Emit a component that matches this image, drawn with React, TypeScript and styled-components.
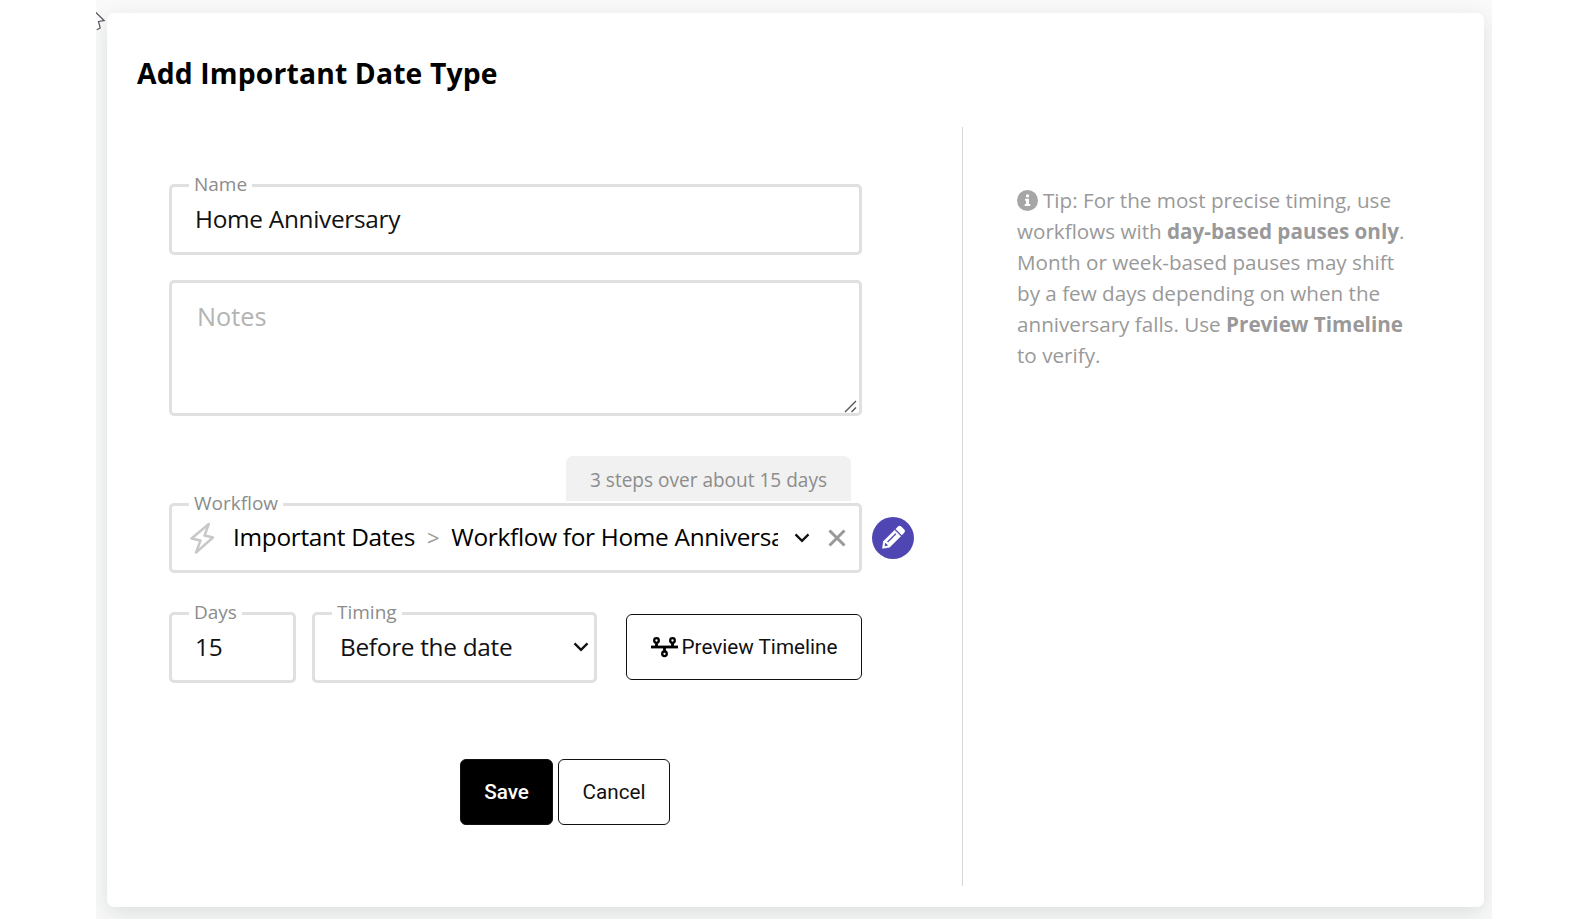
import React from "react";
import styled, { createGlobalStyle } from "styled-components";

const Global = createGlobalStyle`
  *, *::before, *::after { box-sizing: border-box; }
  body { margin: 0; background: #fff; font-family: "Open Sans", sans-serif; color: #000; }
  button, input, textarea { font-family: inherit; }
`;

const Screen = styled.div`
  position: relative;
  width: 1396px;
  height: 919px;
  margin-left: 96px;
  padding: 13px 8px 12px 11px;
  background: #f9f9f9;
  overflow: hidden;
`;

const Cursor = styled.svg`
  position: absolute;
  left: 0;
  top: 11px;
`;

const Card = styled.main`
  display: flex;
  flex-direction: column;
  height: 894px;
  background: #fff;
  border-radius: 7px;
  box-shadow: 0 7px 22px rgba(20, 40, 40, 0.12);
`;

const Title = styled.h1`
  margin: 0;
  padding: 40px 30px 0;
  height: 114px;
  font-size: 28.3px;
  line-height: 40px;
  font-weight: 700;
  letter-spacing: 0.15px;
  white-space: nowrap;
`;

const Columns = styled.div`
  display: flex;
  height: 759px;
`;

const Form = styled.form`
  display: flex;
  flex-direction: column;
  width: 856px;
  padding: 45px 0 0 62px;
  border-right: 1px solid #d8d8d8;
`;

const Field = styled.fieldset<{ $w: number; $h: number }>`
  width: ${(p) => p.$w}px;
  height: ${(p) => p.$h}px;
  flex: none;
  min-width: 0;
  margin: 0;
  padding: 0 8px 0 17px;
  border: 3px solid #e0e0e0;
  border-radius: 5px;
`;

const Legend = styled.legend`
  height: 27px;
  padding: 0 5px;
  font-size: 19px;
  line-height: 25px;
  color: #8c8c8c;
`;

const TextInput = styled.input`
  display: block;
  width: 100%;
  height: 34px;
  margin-top: 2px;
  padding: 0 6px;
  border: 0;
  outline: 0;
  background: transparent;
  font-size: 24.4px;
  letter-spacing: -0.3px;
  color: #111;
`;

const NotesBox = styled.div`
  position: relative;
  width: 693px;
  height: 136px;
  margin-top: 25px;
`;

const Notes = styled.textarea`
  display: block;
  width: 100%;
  height: 100%;
  padding: 16px 25px;
  border: 3px solid #e0e0e0;
  border-radius: 5px;
  outline: 0;
  resize: none;
  font-size: 25.3px;
  line-height: 34px;
  &::placeholder { color: #b4b4b4; }
`;

const Grip = styled.svg`
  position: absolute;
  right: 5px;
  bottom: 3px;
`;

const StepTab = styled.div`
  display: flex;
  align-items: center;
  justify-content: center;
  width: 285px;
  height: 45px;
  margin: 40px 0 0 397px;
  border-radius: 7px 7px 0 0;
  background: #f1f1f1;
  color: #8c8c8c;
  font-size: 19.05px;
  padding-top: 3px;
`;

const WorkflowRow = styled.div`
  display: flex;
  align-items: flex-end;
  gap: 10px;
  height: 82px;
  margin-top: -10px;
`;

const Picker = styled.div`
  display: flex;
  align-items: center;
  height: 34px;
  margin-top: 3px;
`;

const Path = styled.div`
  flex: none;
  width: 545px;
  margin: -2px 16px 0 18px;
  overflow: hidden;
  white-space: nowrap;
  font-size: 24.4px;
  letter-spacing: -0.3px;
  line-height: 34px;
`;

const Separator = styled.span`
  margin: 0 12px 0 12px;
  font-size: 22px;
  color: #999;
`;

const ClearIcon = styled.svg`
  margin-left: 18px;
`;

const EditButton = styled.button`
  display: grid;
  place-items: center;
  width: 42px;
  height: 42px;
  margin-bottom: 14px;
  padding: 0;
  border: 0;
  border-radius: 50%;
  background: #4f46b3;
`;

const TimingRow = styled.div`
  display: flex;
  align-items: flex-end;
  gap: 16px;
  height: 83px;
  margin-top: 27px;
`;

const Select = styled.div`
  display: flex;
  align-items: center;
  justify-content: space-between;
  height: 34px;
  margin: 2px -3px 0 0;
  padding-left: 8px;
  font-size: 24.4px;
  letter-spacing: -0.3px;
  color: #111;

  svg {
    margin-top: 2px;
  }
`;

const Button = styled.button<{ $w: number; $primary?: boolean }>`
  display: flex;
  align-items: center;
  justify-content: center;
  gap: 4px;
  flex: none;
  width: ${(p) => p.$w}px;
  height: 66px;
  padding: 0;
  border: 1px solid #111;
  border-radius: 6px;
  background: ${(p) => (p.$primary ? "#000" : "#fff")};
  color: ${(p) => (p.$primary ? "#fff" : "#111")};
  font-family: Roboto, sans-serif;
  font-size: 20.7px;
  font-weight: ${(p) => (p.$primary ? 500 : 400)};
  white-space: nowrap;
`;

const PreviewSlot = styled.div`
  margin: 0 0 3px 13px;
`;

const Actions = styled.div`
  display: flex;
  gap: 5px;
  margin: 76px 0 0 291px;
`;

const Tip = styled.aside`
  padding: 58px 0 0 54px;
  font-size: 20.65px;
  line-height: 30.9px;
  color: #999;
  white-space: nowrap;
`;

const InfoIcon = styled.svg`
  vertical-align: -3px;
  margin-right: 5px;
`;

const Chevron = () => (
  <svg width="16" height="10" viewBox="0 0 16 10" fill="none" stroke="#111" strokeWidth="2.3">
    <path d="M1.5 1.4 8 7.9l6.5-6.5" />
  </svg>
);

const Bolt = () => (
  <svg width="26" height="34" viewBox="0 0 26 34" fill="none" stroke="#c8c8c8" strokeWidth="2.5" strokeLinejoin="round">
    <path d="M19.800 3 2.500 17.500 11.500 19.500 7 31.500 24 16.500 15.500 14.500Z" />
  </svg>
);

const Pencil = () => (
  <svg width="42" height="42" viewBox="-21 -21 42 42">
    <g transform="translate(-.2 0) rotate(-45) scale(.94)">
      <path d="M-15.500 0-9.500-4.500H7.300V4.500H-9.500Z" fill="#fff" strokeLinejoin="round" stroke="#fff" strokeWidth=".6" />
      <path d="M8.900-4.700H12.500Q15-4.700 15-2.300V2.300Q15 4.700 12.500 4.700H8.900Z" fill="#fff" />
      <path d="M-7-.9H5.500" stroke="#4f46b3" strokeWidth="1.300" />
      <path d="M-12.300 0-9.200-2.200V2.200Z" fill="#4f46b3" />
    </g>
  </svg>
);

const TimelineIcon = () => (
  <svg width="27" height="21" viewBox="0 0 27 21" fill="none" stroke="#000" strokeWidth="2.300">
    <path d="M0 10H27" strokeWidth="2.800" />
    <path d="M5.500 6V10M21.500 6V10M13.500 10V14.500" strokeWidth="2.800" />
    <circle cx="5.500" cy="3.500" r="2.300" />
    <circle cx="21.500" cy="3.500" r="2.300" />
    <circle cx="13.500" cy="16.800" r="2.300" />
  </svg>
);

export default function App() {
  return (
    <>
      <Global />
      <Screen>
        <Cursor width="10" height="20" viewBox="0 0 10 20" fill="#fff" stroke="#555563" strokeWidth="1.2">
          <path d="M-.5 1.200 8.200 9.700 2.500 10.500 4.200 17 .8 18.800" />
        </Cursor>
        <Card>
          <Title>Add Important Date Type</Title>
          <Columns>
            <Form>
              <Field $w={693} $h={83}>
                <Legend>Name</Legend>
                <TextInput defaultValue="Home Anniversary" />
              </Field>
              <NotesBox>
                <Notes placeholder="Notes" />
                <Grip width="13" height="13" viewBox="0 0 13 13" stroke="#555" strokeWidth="1.4">
                  <path d="M1 12 12 1M7.500 12 12 7.500" />
                </Grip>
              </NotesBox>
              <StepTab>3 steps over about 15 days</StepTab>
              <WorkflowRow>
                <Field $w={693} $h={82}>
                  <Legend>Workflow</Legend>
                  <Picker>
                    <Bolt />
                    <Path>
                      Important Dates<Separator>&gt;</Separator>Workflow for Home Anniversary
                    </Path>
                    <Chevron />
                    <ClearIcon width="18" height="18" viewBox="0 0 18 18" stroke="#999" strokeWidth="3">
                      <path d="M1.500 1.500 16.500 16.500M16.500 1.500 1.500 16.500" />
                    </ClearIcon>
                  </Picker>
                </Field>
                <EditButton type="button" aria-label="Edit workflow">
                  <Pencil />
                </EditButton>
              </WorkflowRow>
              <TimingRow>
                <Field $w={127} $h={83}>
                  <Legend>Days</Legend>
                  <TextInput defaultValue="15" />
                </Field>
                <Field $w={285} $h={83}>
                  <Legend>Timing</Legend>
                  <Select>
                    Before the date
                    <Chevron />
                  </Select>
                </Field>
                <PreviewSlot>
                  <Button type="button" $w={236}>
                    <TimelineIcon />
                    Preview Timeline
                  </Button>
                </PreviewSlot>
              </TimingRow>
              <Actions>
                <Button type="button" $w={93} $primary>Save</Button>
                <Button type="button" $w={112}>Cancel</Button>
              </Actions>
            </Form>
            <Tip>
              <InfoIcon width="21" height="21" viewBox="0 0 21 21">
                <circle cx="10.5" cy="10.5" r="10.5" fill="#a6a6a6" />
                <path d="M9 4.500h3v2.700H9zM8 8.700h4v5.300h1.300v2H7.700v-2H9v-3.300H8z" fill="#fff" />
              </InfoIcon>
              Tip: For the most precise timing, use<br />
              workflows with <b>day-based pauses only</b>.<br />
              Month or week-based pauses may shift<br />
              by a few days depending on when the<br />
              anniversary falls. Use <b>Preview Timeline</b><br />
              to verify.
            </Tip>
          </Columns>
        </Card>
      </Screen>
    </>
  );
}
